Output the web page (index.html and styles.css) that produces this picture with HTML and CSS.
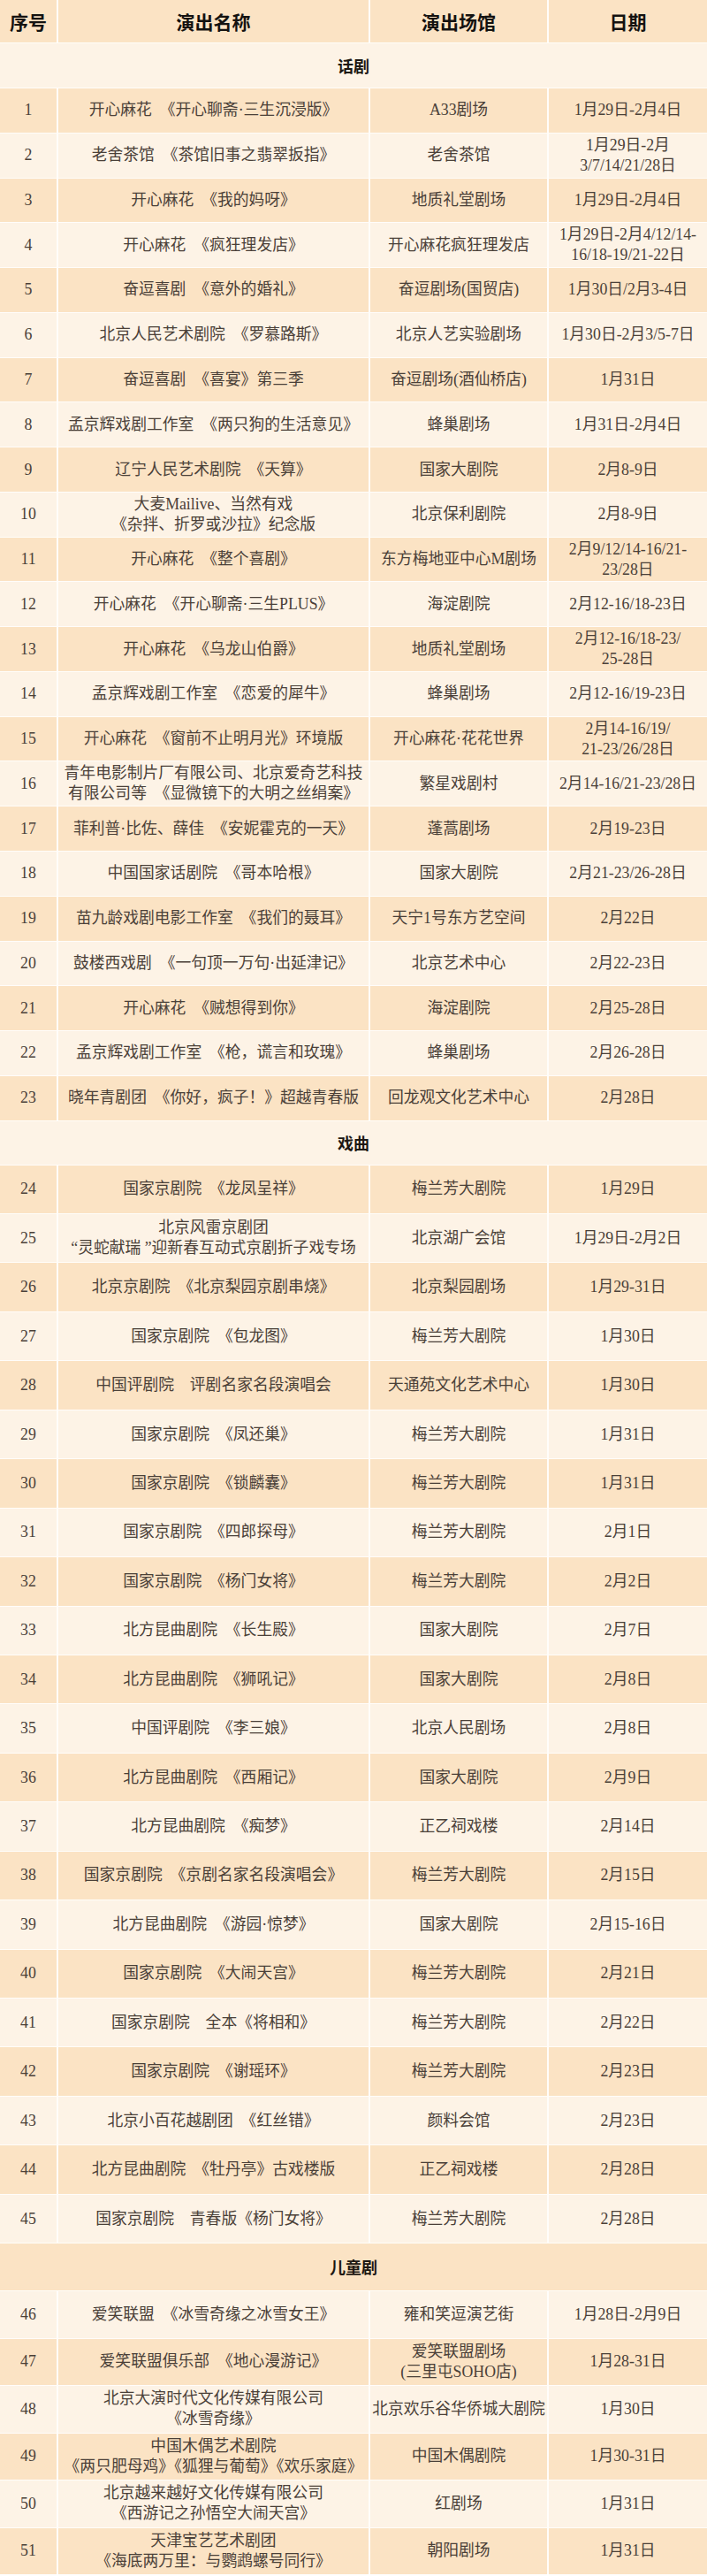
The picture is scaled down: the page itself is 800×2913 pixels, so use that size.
FILE: index.html
```html
<!DOCTYPE html>
<html lang="zh-CN">
<head>
<meta charset="utf-8">
<title>演出信息</title>
<link rel="stylesheet" href="styles.css">
</head>
<body>
<div class="table">
  <div class="row head">
    <div class="c">序号</div><div class="c">演出名称</div><div class="c">演出场馆</div><div class="c">日期</div>
  </div>

  <div class="group g1">
    <div class="row sec"><div class="s">话剧</div></div>
    <div class="row"><div class="c">1</div><div class="c">开心麻花　《开心聊斋·三生沉浸版》</div><div class="c">A33剧场</div><div class="c">1月29日-2月4日</div></div>
    <div class="row"><div class="c">2</div><div class="c">老舍茶馆　《茶馆旧事之翡翠扳指》</div><div class="c">老舍茶馆</div><div class="c">1月29日-2月<br>3/7/14/21/28日</div></div>
    <div class="row"><div class="c">3</div><div class="c">开心麻花　《我的妈呀》</div><div class="c">地质礼堂剧场</div><div class="c">1月29日-2月4日</div></div>
    <div class="row"><div class="c">4</div><div class="c">开心麻花　《疯狂理发店》</div><div class="c">开心麻花疯狂理发店</div><div class="c">1月29日-2月4/12/14-<br>16/18-19/21-22日</div></div>
    <div class="row"><div class="c">5</div><div class="c">奋逗喜剧　《意外的婚礼》</div><div class="c">奋逗剧场(国贸店)</div><div class="c">1月30日/2月3-4日</div></div>
    <div class="row"><div class="c">6</div><div class="c">北京人民艺术剧院　《罗慕路斯》</div><div class="c">北京人艺实验剧场</div><div class="c">1月30日-2月3/5-7日</div></div>
    <div class="row"><div class="c">7</div><div class="c">奋逗喜剧　《喜宴》第三季</div><div class="c">奋逗剧场(酒仙桥店)</div><div class="c">1月31日</div></div>
    <div class="row"><div class="c">8</div><div class="c">孟京辉戏剧工作室　《两只狗的生活意见》</div><div class="c">蜂巢剧场</div><div class="c">1月31日-2月4日</div></div>
    <div class="row"><div class="c">9</div><div class="c">辽宁人民艺术剧院　《天算》</div><div class="c">国家大剧院</div><div class="c">2月8-9日</div></div>
    <div class="row"><div class="c">10</div><div class="c">大麦Mailive、当然有戏<br>《杂拌、折罗或沙拉》纪念版</div><div class="c">北京保利剧院</div><div class="c">2月8-9日</div></div>
    <div class="row"><div class="c">11</div><div class="c">开心麻花　《整个喜剧》</div><div class="c">东方梅地亚中心M剧场</div><div class="c">2月9/12/14-16/21-<br>23/28日</div></div>
    <div class="row"><div class="c">12</div><div class="c">开心麻花　《开心聊斋·三生PLUS》</div><div class="c">海淀剧院</div><div class="c">2月12-16/18-23日</div></div>
    <div class="row"><div class="c">13</div><div class="c">开心麻花　《乌龙山伯爵》</div><div class="c">地质礼堂剧场</div><div class="c">2月12-16/18-23/<br>25-28日</div></div>
    <div class="row"><div class="c">14</div><div class="c">孟京辉戏剧工作室　《恋爱的犀牛》</div><div class="c">蜂巢剧场</div><div class="c">2月12-16/19-23日</div></div>
    <div class="row"><div class="c">15</div><div class="c">开心麻花　《窗前不止明月光》环境版</div><div class="c">开心麻花·花花世界</div><div class="c">2月14-16/19/<br>21-23/26/28日</div></div>
    <div class="row"><div class="c">16</div><div class="c">青年电影制片厂有限公司、北京爱奇艺科技<br>有限公司等　《显微镜下的大明之丝绢案》</div><div class="c">繁星戏剧村</div><div class="c">2月14-16/21-23/28日</div></div>
    <div class="row"><div class="c">17</div><div class="c">菲利普·比佐、薛佳　《安妮霍克的一天》</div><div class="c">蓬蒿剧场</div><div class="c">2月19-23日</div></div>
    <div class="row"><div class="c">18</div><div class="c">中国国家话剧院　《哥本哈根》</div><div class="c">国家大剧院</div><div class="c">2月21-23/26-28日</div></div>
    <div class="row"><div class="c">19</div><div class="c">苗九龄戏剧电影工作室　《我们的聂耳》</div><div class="c">天宁1号东方艺空间</div><div class="c">2月22日</div></div>
    <div class="row"><div class="c">20</div><div class="c">鼓楼西戏剧　《一句顶一万句·出延津记》</div><div class="c">北京艺术中心</div><div class="c">2月22-23日</div></div>
    <div class="row"><div class="c">21</div><div class="c">开心麻花　《贼想得到你》</div><div class="c">海淀剧院</div><div class="c">2月25-28日</div></div>
    <div class="row"><div class="c">22</div><div class="c">孟京辉戏剧工作室　《枪，谎言和玫瑰》</div><div class="c">蜂巢剧场</div><div class="c">2月26-28日</div></div>
    <div class="row"><div class="c">23</div><div class="c">晓年青剧团　《你好，疯子！》超越青春版</div><div class="c">回龙观文化艺术中心</div><div class="c">2月28日</div></div>
  </div>

  <div class="group g2">
    <div class="row sec"><div class="s">戏曲</div></div>
    <div class="row"><div class="c">24</div><div class="c">国家京剧院　《龙凤呈祥》</div><div class="c">梅兰芳大剧院</div><div class="c">1月29日</div></div>
    <div class="row"><div class="c">25</div><div class="c">北京风雷京剧团<br>“灵蛇献瑞 ”迎新春互动式京剧折子戏专场</div><div class="c">北京湖广会馆</div><div class="c">1月29日-2月2日</div></div>
    <div class="row"><div class="c">26</div><div class="c">北京京剧院　《北京梨园京剧串烧》</div><div class="c">北京梨园剧场</div><div class="c">1月29-31日</div></div>
    <div class="row"><div class="c">27</div><div class="c">国家京剧院　《包龙图》</div><div class="c">梅兰芳大剧院</div><div class="c">1月30日</div></div>
    <div class="row"><div class="c">28</div><div class="c">中国评剧院　评剧名家名段演唱会</div><div class="c">天通苑文化艺术中心</div><div class="c">1月30日</div></div>
    <div class="row"><div class="c">29</div><div class="c">国家京剧院　《凤还巢》</div><div class="c">梅兰芳大剧院</div><div class="c">1月31日</div></div>
    <div class="row"><div class="c">30</div><div class="c">国家京剧院　《锁麟囊》</div><div class="c">梅兰芳大剧院</div><div class="c">1月31日</div></div>
    <div class="row"><div class="c">31</div><div class="c">国家京剧院　《四郎探母》</div><div class="c">梅兰芳大剧院</div><div class="c">2月1日</div></div>
    <div class="row"><div class="c">32</div><div class="c">国家京剧院　《杨门女将》</div><div class="c">梅兰芳大剧院</div><div class="c">2月2日</div></div>
    <div class="row"><div class="c">33</div><div class="c">北方昆曲剧院　《长生殿》</div><div class="c">国家大剧院</div><div class="c">2月7日</div></div>
    <div class="row"><div class="c">34</div><div class="c">北方昆曲剧院　《狮吼记》</div><div class="c">国家大剧院</div><div class="c">2月8日</div></div>
    <div class="row"><div class="c">35</div><div class="c">中国评剧院　《李三娘》</div><div class="c">北京人民剧场</div><div class="c">2月8日</div></div>
    <div class="row"><div class="c">36</div><div class="c">北方昆曲剧院　《西厢记》</div><div class="c">国家大剧院</div><div class="c">2月9日</div></div>
    <div class="row"><div class="c">37</div><div class="c">北方昆曲剧院　《痴梦》</div><div class="c">正乙祠戏楼</div><div class="c">2月14日</div></div>
    <div class="row"><div class="c">38</div><div class="c">国家京剧院　《京剧名家名段演唱会》</div><div class="c">梅兰芳大剧院</div><div class="c">2月15日</div></div>
    <div class="row"><div class="c">39</div><div class="c">北方昆曲剧院　《游园·惊梦》</div><div class="c">国家大剧院</div><div class="c">2月15-16日</div></div>
    <div class="row"><div class="c">40</div><div class="c">国家京剧院　《大闹天宫》</div><div class="c">梅兰芳大剧院</div><div class="c">2月21日</div></div>
    <div class="row"><div class="c">41</div><div class="c">国家京剧院　全本《将相和》</div><div class="c">梅兰芳大剧院</div><div class="c">2月22日</div></div>
    <div class="row"><div class="c">42</div><div class="c">国家京剧院　《谢瑶环》</div><div class="c">梅兰芳大剧院</div><div class="c">2月23日</div></div>
    <div class="row"><div class="c">43</div><div class="c">北京小百花越剧团　《红丝错》</div><div class="c">颜料会馆</div><div class="c">2月23日</div></div>
    <div class="row"><div class="c">44</div><div class="c">北方昆曲剧院　《牡丹亭》古戏楼版</div><div class="c">正乙祠戏楼</div><div class="c">2月28日</div></div>
    <div class="row"><div class="c">45</div><div class="c">国家京剧院　青春版《杨门女将》</div><div class="c">梅兰芳大剧院</div><div class="c">2月28日</div></div>
  </div>

  <div class="group g3">
    <div class="row sec"><div class="s">儿童剧</div></div>
    <div class="row"><div class="c">46</div><div class="c">爱笑联盟　《冰雪奇缘之冰雪女王》</div><div class="c">雍和笑逗演艺街</div><div class="c">1月28日-2月9日</div></div>
    <div class="row"><div class="c">47</div><div class="c">爱笑联盟俱乐部　《地心漫游记》</div><div class="c">爱笑联盟剧场<br>(三里屯SOHO店)</div><div class="c">1月28-31日</div></div>
    <div class="row"><div class="c">48</div><div class="c">北京大演时代文化传媒有限公司<br>《冰雪奇缘》</div><div class="c">北京欢乐谷华侨城大剧院</div><div class="c">1月30日</div></div>
    <div class="row"><div class="c">49</div><div class="c">中国木偶艺术剧院<br>《两只肥母鸡》《狐狸与葡萄》《欢乐家庭》</div><div class="c">中国木偶剧院</div><div class="c">1月30-31日</div></div>
    <div class="row"><div class="c">50</div><div class="c">北京越来越好文化传媒有限公司<br>《西游记之孙悟空大闹天宫》</div><div class="c">红剧场</div><div class="c">1月31日</div></div>
    <div class="row"><div class="c">51</div><div class="c">天津宝艺艺术剧团<br>《海底两万里：与鹦鹉螺号同行》</div><div class="c">朝阳剧场</div><div class="c">1月31日</div></div>
  </div>
</div>
</body>
</html>
```

FILE: styles.css
```css
html, body {
  margin: 0;
  padding: 0;
  background: #ffffff;
}

.table {
  width: 800px;
  display: flex;
  flex-direction: column;
  gap: 1px;
  background: #fffdfa;
  font-family: "Liberation Serif", "Noto Sans CJK SC", serif;
  font-size: 17.8px;
  line-height: 23px;
  color: #4a4038;
}

.group {
  display: flex;
  flex-direction: column;
  gap: 1px;
}

.row {
  display: grid;
  grid-template-columns: 64px 351px 200px 1fr;
  column-gap: 2px;
  background: #fffdfa;
}

.c {
  display: flex;
  align-items: center;
  justify-content: center;
  text-align: center;
  white-space: nowrap;
  background: #fdf3e6;
}

.s {
  grid-column: 1 / -1;
  display: flex;
  align-items: center;
  justify-content: center;
  font-family: "Noto Sans CJK SC", sans-serif;
  font-weight: 700;
  font-size: 18px;
  color: #1c1712;
  background: #fdf3e6;
}

/* header */
.head {
  height: 48px;
}
.head .c {
  background: #fbe3c4;
  font-family: "Noto Sans CJK SC", sans-serif;
  font-weight: 700;
  font-size: 21px;
  color: #141210;
}

/* alternating colours inside groups */
.g1 .row:nth-child(even) .c,
.g2 .row:nth-child(even) .c {
  background: #fbe3c4;
}
.g3 .row:nth-child(odd) .c,
.g3 .row:nth-child(odd) .s {
  background: #fbe3c4;
}

/* row heights per section */
.g1 .row { height: 49.78px; }
.g1 .sec { height: 50px; }
.g2 .row { height: 54.45px; }
.g2 .sec { height: 49px; }
.g3 .row { height: 52.5px; }
.g3 .sec { height: 53px; }
```
